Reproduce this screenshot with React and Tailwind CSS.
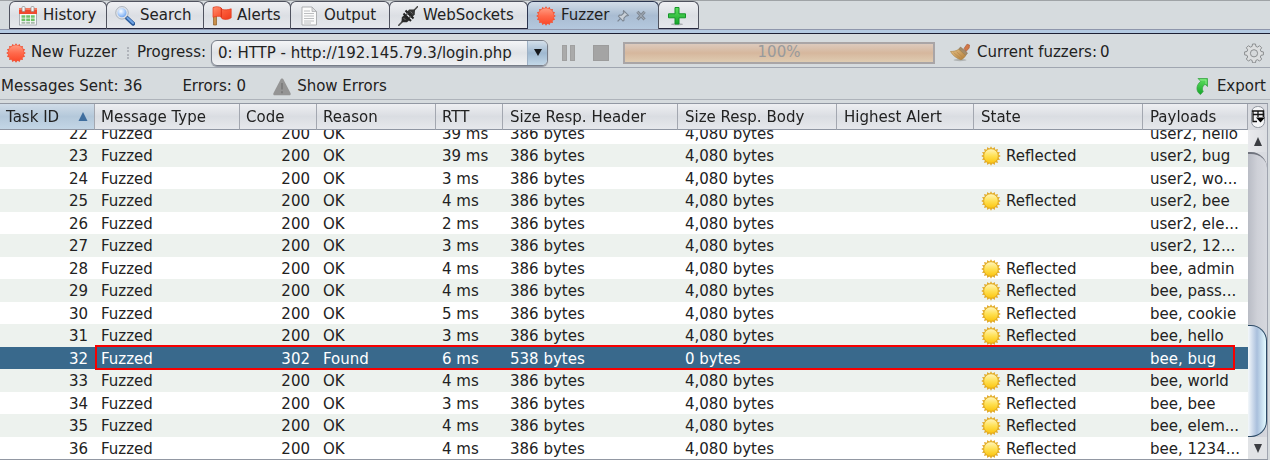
import React, { useLayoutEffect, useRef } from "react";

const burst = (cx, cy, outer, inner, n) =>
  Array.from({ length: n * 2 }, (_, i) => {
    const r = i % 2 ? inner : outer;
    const a = (Math.PI * i) / n - Math.PI / 2;
    return `${(cx + r * Math.cos(a)).toFixed(2)},${(cy + r * Math.sin(a)).toFixed(2)}`;
  }).join(" ");

function Gradients() {
  return (
    <svg width="0" height="0" className="absolute" aria-hidden="true">
      <defs>
        <linearGradient id="red" x1="0" y1="0" x2="0" y2="1">
          <stop offset="0" stopColor="#ff9a80" />
          <stop offset="0.5" stopColor="#ff6a4c" />
          <stop offset="1" stopColor="#fb4a2b" />
        </linearGradient>
        <linearGradient id="sun" x1="0" y1="0" x2="0" y2="1">
          <stop offset="0" stopColor="#fff6c0" />
          <stop offset="0.5" stopColor="#ffe052" />
          <stop offset="1" stopColor="#fbc40e" />
        </linearGradient>
        <linearGradient id="flag" x1="0" y1="0" x2="1" y2="1">
          <stop offset="0" stopColor="#ff9070" />
          <stop offset="0.5" stopColor="#fb5a38" />
          <stop offset="1" stopColor="#ee3a1c" />
        </linearGradient>
        <linearGradient id="green" x1="0" y1="0" x2="0" y2="1">
          <stop offset="0" stopColor="#5fe060" />
          <stop offset="1" stopColor="#15a52a" />
        </linearGradient>
        <linearGradient id="bristle" x1="0" y1="0" x2="1" y2="1">
          <stop offset="0" stopColor="#e6c48c" />
          <stop offset="1" stopColor="#b07a34" />
        </linearGradient>
        <radialGradient id="lens" cx="0.4" cy="0.35" r="0.7">
          <stop offset="0" stopColor="#ffffff" />
          <stop offset="0.5" stopColor="#a9ccfb" />
          <stop offset="1" stopColor="#5e98ea" />
        </radialGradient>
      </defs>
    </svg>
  );
}

const Svg = ({ children, className = "size-5" }) => (
  <svg viewBox="0 0 20 20" className={`${className} shrink-0`} aria-hidden="true">
    {children}
  </svg>
);

const RedBurst = () => (
  <Svg>
    <polygon points={burst(10, 10, 9.8, 8, 16)} fill="#f0573a" />
    <circle cx="10" cy="10" r="7.8" fill="url(#red)" />
  </Svg>
);

const Sun = () => (
  <Svg>
    <polygon points={burst(10, 10, 9.8, 7.4, 16)} fill="#e0a92c" />
    <circle cx="10" cy="10" r="7.3" fill="url(#sun)" stroke="#e3ad20" strokeWidth="0.9" />
  </Svg>
);

const CalendarIcon = () => (
  <Svg>
    <rect x="1.5" y="2.5" width="17" height="16.5" fill="#f7f8f8" stroke="#9aa0a6" strokeWidth="0.8" />
    <rect x="1" y="2" width="18" height="6" fill="#ee4a2f" />
    <rect x="1" y="2" width="18" height="2" fill="#f67a60" />
    <rect x="4" y="0.5" width="3" height="5" rx="1" fill="#f4f4f4" stroke="#8c8c8c" strokeWidth="0.7" />
    <rect x="13" y="0.5" width="3" height="5" rx="1" fill="#f4f4f4" stroke="#8c8c8c" strokeWidth="0.7" />
    <path d="M3.500 9.200h3.800v2.500H3.500zM8.200 9.200h3.800v2.500H8.200zM12.900 9.200h3.800v2.500h-3.800zM3.500 12.500h3.800V15H3.500zM8.200 12.500h3.800V15H8.200zM12.900 12.500h3.800V15h-3.800z" fill="#6fc268" />
    <path d="M3.500 15.800h3.800v2H3.500zM8.200 15.800h3.800v2H8.200zM12.900 15.800h3.800v2h-3.800z" fill="#a8bcaa" />
  </Svg>
);

const SearchIcon = () => (
  <Svg>
    <path d="M12 12l6.200 5.700" stroke="#2c5c9c" strokeWidth="4.200" strokeLinecap="round" />
    <path d="M12.500 12l5.500 5" stroke="#6ea3e4" strokeWidth="2" strokeLinecap="round" />
    <circle cx="7" cy="6.800" r="5.300" fill="url(#lens)" stroke="#dfe3e9" strokeWidth="1.600" />
    <circle cx="7" cy="6.800" r="6.300" fill="none" stroke="#8b95a3" strokeWidth="0.600" />
  </Svg>
);

const FlagIcon = () => (
  <Svg>
    <path d="M1.500 1.500h3V19h-3z" fill="#c98f4a" stroke="#8f5d25" strokeWidth="0.700" />
    <path d="M1 1.500c3-1.400 6-.8 8 .2l.8 1.600c3 .9 6 .7 9.400-.5v9c-2.800 2-6.500 2-9.200.9l-1-2c-2.300-.7-5-.5-8 .6z" fill="url(#flag)" stroke="#e23b1d" strokeWidth="0.700" />
    <path d="M9.300 2v9.500" stroke="#d92f14" strokeWidth="1" />
  </Svg>
);

const DocIcon = () => (
  <Svg>
    <path d="M3 1h10l4.500 4.500V19H3z" fill="#fbfbfb" stroke="#a6a8aa" strokeWidth="0.900" />
    <path d="M13 1v4.500h4.500z" fill="#dcdedf" stroke="#a6a8aa" strokeWidth="0.700" />
    <path d="M5 5h6M5 7.500h10M5 10h10M5 12.500h10M5 15h10M5 17h7" stroke="#bcbec0" strokeWidth="1" />
  </Svg>
);

const PlugIcon = () => (
  <Svg>
    <path d="M.8 19.300L6 14M14.500 6l5-5.300" stroke="#4a4a4a" strokeWidth="1.600" strokeLinecap="round" fill="none" />
    <path d="M3.500 16.300l.3-5 3.200-3 5.300 5-3.300 3z" fill="#2b2b2b" />
    <path d="M17 3.500l-.3 5-3 3.300-5.500-5.300 3-3z" fill="#353535" />
    <path d="M5.500 7.500l7.500 7.500M7.500 4.500l8 8" stroke="#222" strokeWidth="2" />
    <path d="M8 9l2-2M11 12l2-2" stroke="#555" strokeWidth="1.600" />
    <path d="M5.500 12l2 2M12.500 5.500l2 2" stroke="#808080" strokeWidth="0.800" />
  </Svg>
);

const PlusIcon = () => (
  <Svg>
    <ellipse cx="10" cy="18.300" rx="6" ry="1" fill="#a9adb2" />
    <path d="M8 1.500h4v6.300h6.500v4H12V18H8v-6.200H1.500v-4H8z" fill="url(#green)" stroke="#149428" strokeWidth="1" />
  </Svg>
);

const PinIcon = () => (
  <Svg className="size-3">
    <path d="M11 1l8 8-2.500 1-1-.5-4 4 .2 3.500-1.700 1.500L2.500 10.500 4 8.500l3.500.2 4-4L10.500 3z" fill="#c9d0d8" stroke="#7c8692" strokeWidth="1.800" />
    <path d="M6 14l-5 5" stroke="#7c8692" strokeWidth="2.200" />
  </Svg>
);

const CloseIcon = () => (
  <Svg className="size-3">
    <path d="M4 3l12 13M16 3L4 16" stroke="#7f8893" strokeWidth="5" />
    <path d="M4 3l12 13M16 3L4 16" stroke="#a9b2bd" strokeWidth="1.500" />
  </Svg>
);

const BroomIcon = () => (
  <Svg>
    <ellipse cx="10" cy="17" rx="6.500" ry="1.200" fill="#b0b4b4" />
    <path d="M14 5.500l3-4.300 2.500.8-.3 3L16 8.500z" fill="#d27848" stroke="#a8532e" strokeWidth="0.600" />
    <path d="M10.500 4l7 6-1.800 2.500L8.500 6.500z" fill="#a58b68" stroke="#7c6442" strokeWidth="0.500" />
    <path d="M8.700 6.300l7 6.200c-1 1.800-2.500 3.300-4.700 4.300C6.500 15.500 2.500 12.300.5 8.500c3.200 0 5.700-.6 8.200-2.200z" fill="url(#bristle)" stroke="#a97f3e" strokeWidth="0.600" />
    <path d="M3.500 9.500l6.500 5.500M6.500 8.700l5.500 5" stroke="#b5874a" strokeWidth="0.600" />
  </Svg>
);

const GearIcon = () => (
  <Svg>
    <g fill="#dcdedf" stroke="#8b8e90" strokeWidth="1">
      <path d="M8.500 1h3l.4 2.400 1.700.7 2-1.400 2.100 2.100-1.400 2 .7 1.700 2.400.4v3l-2.400.4-.7 1.700 1.400 2-2.100 2.100-2-1.400-1.700.7-.4 2.400h-3l-.4-2.400-1.700-.7-2 1.400-2.100-2.100 1.400-2-.7-1.700L.6 11.900v-3L3 8.500l.7-1.700-1.400-2 2.100-2.100 2 1.400 1.700-.7z" />
      <circle cx="10" cy="10.300" r="3.600" fill="#d6d9db" />
    </g>
  </Svg>
);

const WarningIcon = () => (
  <Svg>
    <path d="M10 1.500c.9 0 1.300.6 1.700 1.400l6.800 13c.6 1.300 0 2.400-1.300 2.400H2.800c-1.300 0-1.900-1.100-1.300-2.400l6.800-13C8.700 2.100 9.100 1.500 10 1.500z" fill="#959595" />
    <path d="M10 6v6.500M10 14.200v2" stroke="#7c7c7c" strokeWidth="1.800" />
  </Svg>
);

const ExportIcon = () => (
  <Svg>
    <path d="M6 1.500h9.500V9.500l-2.500-2.300c-2.500 2-3.300 4.500-1.800 7.300L8.500 17.500C3.500 14.500 4 8 8.800 4.300z" fill="url(#green)" stroke="#3aa545" strokeWidth="0.800" />
    <path d="M8 3h6v4" stroke="#9bee98" strokeWidth="0.800" fill="none" />
  </Svg>
);

const ColumnsIcon = () => (
  <svg viewBox="0 0 14 22" className="h-[22px] w-3.5" aria-hidden="true">
    <rect x="0.500" y="0.500" width="13" height="21" rx="6" fill="#f4f5f7" stroke="#8d929b" />
    <path d="M1 5h12M2 8.500h11M2 4.500v11h4M7 5v6M12.300 5v6" stroke="#111" strokeWidth="1.300" fill="none" />
    <path d="M5 11.500h9L9.500 16.500z" fill="#000" />
  </svg>
);

const Tab = ({ icon, label, width, active, children }) => (
  <div
    className={`-mr-px flex h-7 items-center rounded-t-md border border-b-0 pl-2 ${width} ${
      active
        ? "border-[#2b3550] bg-linear-to-b from-[#d3dde8] via-[#a9bcd2] to-[#b4c8de]"
        : "border-[#50535f] bg-linear-to-b from-[#eff0f3] via-[#dcdfe4] to-[#e6e8ec] shadow-[inset_0_-1px_0_#25273d]"
    }`}
  >
    <button type="button" role="tab" aria-selected={!!active} aria-label={label ? undefined : "Add tab"} className="flex items-center gap-[5px]">
      {icon}
      {label}
    </button>
    {children}
  </div>
);

const COLUMNS = [
  ["Task ID", "w-[95px]"],
  ["Message Type", "w-[145px]"],
  ["Code", "w-[77px]"],
  ["Reason", "w-[119px]"],
  ["RTT", "w-[67px]"],
  ["Size Resp. Header", "w-[175px]"],
  ["Size Resp. Body", "w-[159px]"],
  ["Highest Alert", "w-[137px]"],
  ["State", "w-[169px]"],
  ["Payloads", ""],
];

const ROWS = [
  [22, 39, false, "user2, hello"],
  [23, 39, true, "user2, bug"],
  [24, 3, false, "user2, wo..."],
  [25, 4, true, "user2, bee"],
  [26, 2, false, "user2, ele..."],
  [27, 3, false, "user2, 12..."],
  [28, 4, true, "bee, admin"],
  [29, 4, true, "bee, pass..."],
  [30, 5, true, "bee, cookie"],
  [31, 3, true, "bee, hello"],
  [32, 6, false, "bee, bug"],
  [33, 4, true, "bee, world"],
  [34, 3, true, "bee, bee"],
  [35, 4, true, "bee, elem..."],
  [36, 4, true, "bee, 1234..."],
];

function Row({ row: [id, rtt, reflected, payload] }) {
  const found = id === 32;
  const cell = "whitespace-nowrap p-0 pt-px pl-[7px]";
  const narrow = "whitespace-nowrap p-0 pt-px pl-1.5";
  const numeric = "p-0 pt-px pr-[7px] text-right";
  return (
    <tr
      aria-selected={found}
      className={`h-[22px] leading-5 even:h-[23px] ${found ? "relative bg-[#39698c] text-white" : "odd:bg-white even:bg-[#edf2ee]"}`}
    >
      <td className={numeric}>
        {id}
        {found && <span className="absolute -top-0.5 right-[13px] -bottom-px left-[95px] border-2 border-[#f80000]" />}
      </td>
      <td className={narrow}>Fuzzed</td>
      <td className={numeric}>{found ? 302 : 200}</td>
      <td className={narrow}>{found ? "Found" : "OK"}</td>
      <td className={narrow}>{rtt} ms</td>
      <td className={cell}>{found ? "538 bytes" : "386 bytes"}</td>
      <td className={cell}>{found ? "0 bytes" : "4,080 bytes"}</td>
      <td className={cell} />
      <td className={cell}>
        {reflected && (
          <span className="flex items-center gap-[5px]">
            <Sun />
            Reflected
          </span>
        )}
      </td>
      <td className={cell}>{payload}</td>
    </tr>
  );
}

function Results() {
  const view = useRef(null);
  useLayoutEffect(() => {
    view.current.scrollTop = view.current.scrollHeight;
  }, []);
  return (
    <div ref={view} className="min-w-0 flex-1 overflow-hidden">
      <table className="w-full table-fixed border-separate border-spacing-0">
        <thead className="sticky top-0 z-10">
          <tr className="h-[26px]">
            {COLUMNS.map(([name, width], i) => (
              <th
                key={name}
                scope="col"
                className={`border-r border-b border-r-[#a3a7b0] border-b-[#8f96a3] p-0 text-left font-normal whitespace-nowrap ${width} ${
                  i === 0
                    ? "bg-linear-to-b from-[#d0dce8] via-[#b4c8da] to-[#c3d6e6]"
                    : "bg-linear-to-b from-[#eeeff2] via-[#dadde2] to-[#e6e8ec]"
                } ${i < 5 ? "pl-1.5" : "pl-[7px]"}`}
              >
                <span className="flex items-center justify-between pr-1.5 leading-5">
                  {name}
                  {i === 0 && (
                    <svg viewBox="0 0 10 10" className="size-2.5" aria-hidden="true">
                      <path d="M5 0l4.500 9h-9z" fill="#3f6e9e" />
                    </svg>
                  )}
                </span>
              </th>
            ))}
          </tr>
        </thead>
        <tbody>
          {ROWS.map((row) => (
            <Row key={row[0]} row={row} />
          ))}
        </tbody>
      </table>
    </div>
  );
}

function Scrollbar() {
  return (
    <div className="flex w-5 flex-col border-r border-[#a0a5b0] bg-[#d9dbe0]">
      <button type="button" aria-label="Column settings" className="flex h-[26px] items-center justify-center">
        <ColumnsIcon />
      </button>
      <button type="button" aria-label="Scroll up" className="flex h-[22px] items-center justify-center bg-linear-to-r from-[#e9eaed] to-[#dcdee2]">
        <svg viewBox="0 0 8 9" className="h-[9px] w-2" aria-hidden="true">
          <path d="M4 0l4 9H0z" fill="#3b3d42" />
        </svg>
      </button>
      <div className="flex flex-1 flex-col justify-end rounded-tr-2xl border-t-2 border-[#70747e] bg-linear-to-r from-[#b9bcc5] via-[#cfd1d8] to-[#d6d8de]">
        <div className="h-28 rounded-r-2xl border border-l-0 border-[#2c4a66] bg-linear-to-r from-[#f4f8fb] via-[#a9bfdc] to-[#e4fbff]" />
      </div>
      <button type="button" aria-label="Scroll down" className="flex h-[22px] items-center justify-center bg-[#e1e3e6]">
        <svg viewBox="0 0 8 9" className="h-[9px] w-2" aria-hidden="true">
          <path d="M4 9l4-9H0z" fill="#3b3d42" />
        </svg>
      </button>
    </div>
  );
}

export default function App() {
  return (
    <div className="flex h-screen flex-col overflow-hidden bg-[#d6dbde] font-['DejaVu_Sans',sans-serif] text-[15px] text-[#222]">
      <Gradients />
      <div role="tablist" className="flex h-[29px] items-end border-t border-[#9fa3a6] pl-[9px]">
        <Tab icon={<CalendarIcon />} label="History" width="w-[98px]" />
        <Tab icon={<SearchIcon />} label="Search" width="w-[98px]" />
        <Tab icon={<FlagIcon />} label="Alerts" width="w-[88px]" />
        <Tab icon={<DocIcon />} label="Output" width="w-[100px]" />
        <Tab icon={<PlugIcon />} label="WebSockets" width="w-[139px]" />
        <Tab icon={<RedBurst />} label="Fuzzer" width="w-[132px]" active>
          <button type="button" aria-label="Pin tab" className="ml-2">
            <PinIcon />
          </button>
          <button type="button" aria-label="Close tab" className="ml-1.5">
            <CloseIcon />
          </button>
        </Tab>
        <Tab icon={<PlusIcon />} width="w-[41px]" />
      </div>
      <div className="h-[5px] border-t border-b border-t-[#8e96ac] border-b-[#1d1f33] bg-[#b4cae2]" />

      <div className="flex h-[34px] items-center border-b border-[#a0a6b0] pt-1 pr-1.5 pl-1.5">
        <button type="button" className="flex items-center gap-[5px]">
          <RedBurst />
          New Fuzzer
        </button>
        <span className="ml-2.5 h-3 border-l-2 border-dotted border-[#b0b4ba]" />
        <label htmlFor="progress" className="ml-2">
          Progress:
        </label>
        <div className="ml-[5px] grid h-[26px] w-[337px] grid-cols-[1fr_20px] overflow-hidden rounded-md border border-[#777d88] bg-linear-to-b from-[#f4f5f7] via-[#dfe2e6] to-[#f0f1f3] shadow-[0_1px_1px_#8d939e]">
          <select id="progress" className="col-span-2 col-start-1 row-start-1 appearance-none bg-transparent pl-1.5 leading-5 outline-none">
            <option>0: HTTP - http://192.145.79.3/login.php</option>
          </select>
          <span className="pointer-events-none col-start-2 row-start-1 flex items-center justify-center border-l border-[#9db0c4] bg-linear-to-b from-[#d3dfea] via-[#9fb8d0] to-[#c3d8e8]">
            <svg viewBox="0 0 8 7" className="h-[7px] w-2" aria-hidden="true">
              <path d="M0 0h8L4 7z" fill="#16181c" />
            </svg>
          </span>
        </div>
        <button type="button" aria-label="Pause" className="ml-3.5 flex gap-[3px]">
          <span className="h-4 w-[5px] border border-[#a0a0a0] bg-[#aaa]" />
          <span className="h-4 w-[5px] border border-[#a0a0a0] bg-[#aaa]" />
        </button>
        <button type="button" aria-label="Stop" className="ml-[18px] size-4 border border-[#9c9c9c] bg-[#a4a4a4]" />
        <div
          role="progressbar"
          aria-label="Fuzzer progress"
          aria-valuenow={100}
          className="ml-3.5 flex h-[22px] w-[312px] items-center justify-center border-2 border-[#a9a5a6] bg-linear-to-b from-[#dccabd] via-[#d6b79d] to-[#dfccb2] text-[#989a9c]"
        >
          100%
        </div>
        <button type="button" aria-label="Clear" className="ml-[15px]">
          <BroomIcon />
        </button>
        <span className="ml-[7px]">Current fuzzers:</span>
        <span className="ml-[3px]">0</span>
        <button type="button" aria-label="Options" className="ml-auto">
          <GearIcon />
        </button>
      </div>

      <div className="flex h-8 items-center border-b border-[#aeb3ba] pt-1.5 pr-1 pl-px">
        <span>Messages Sent: 36</span>
        <span className="ml-10">Errors: 0</span>
        <button type="button" className="ml-[26px] flex items-center gap-[5px]">
          <WarningIcon />
          Show Errors
        </button>
        <button type="button" className="ml-auto flex items-center gap-[5px]">
          <ExportIcon />
          Export
        </button>
      </div>

      <main className="mt-[3px] mr-0.5 flex min-h-0 flex-1 border-t border-b border-[#9298a3]">
        <Results />
        <Scrollbar />
      </main>
    </div>
  );
}
